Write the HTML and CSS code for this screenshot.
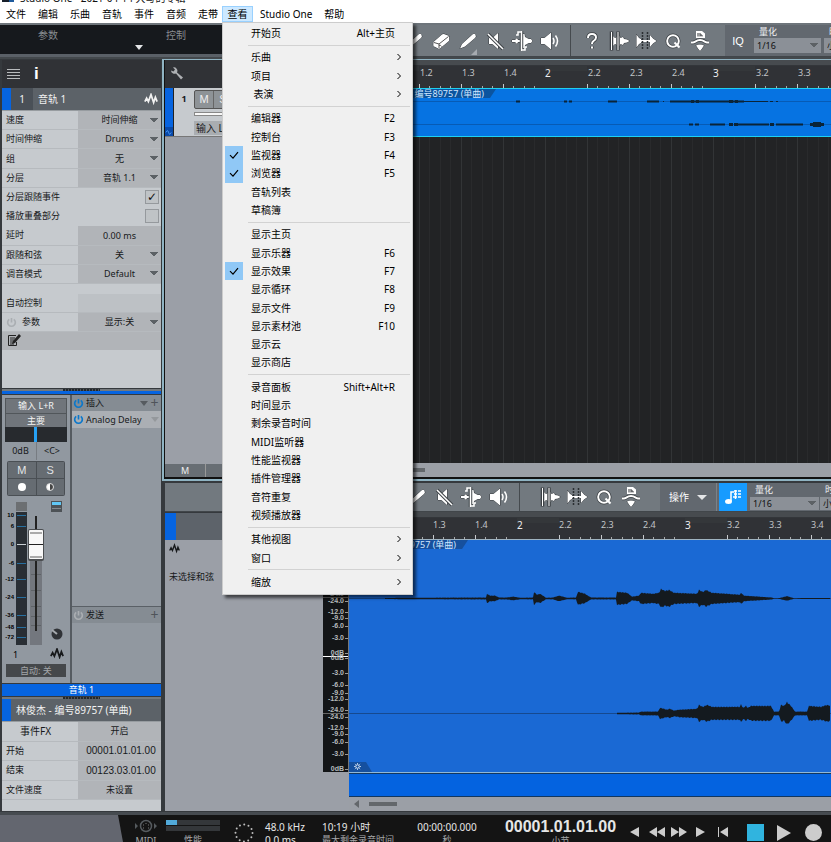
FILE: index.html
```html
<!DOCTYPE html>
<html lang="zh-CN">
<head>
<meta charset="utf-8">
<title>Studio One</title>
<link rel="stylesheet" href="styles.css">
</head>
<body>
<svg class="defs" aria-hidden="true">
  <symbol id="pen" viewBox="0 0 22 22"><path class="ink edge" d="M3 18.500 5 14 15.500 4.500q2-1.500 3 .5t-.5 3L8 16.500z"/></symbol>
  <symbol id="eraser" viewBox="0 0 22 22"><path class="ink edge" d="m3.500 12 8.500-7.500q1-.8 2.500-.3l4 1.500q.8.500.7 1.500v3.500l-9 7.500q-1 .8-2 .3l-4-2q-.9-.5-.9-1.500z"/><path class="cut" d="m4 12.500 5 1.500v4M9 14l9.500-7.500M9 15.500q1.500-1 2.500 1"/></symbol>
  <symbol id="mute" viewBox="0 0 22 22"><path class="ink edge" d="M5 8h3.500L14 3v16l-5.500-5H5z"/><path class="cut2" d="m4 4 15 15"/><path class="line" d="m4 4 15 15"/></symbol>
  <symbol id="split" viewBox="0 0 22 22"><path class="ink edge" d="M1 10h3l2-2 1 2h2v2H7l-1 2-2-2H1zM12 4h1.500l.5 3 2 1 1.500 1H20l1.500 2-1.500 2h-2.500L16 14l-2 1-.5 3H12z"/><path class="cut2" d="M10.500 1v20"/><path class="line" d="M10.500 1v20M10 2H7v3H5M11 20h3v-3h2"/></symbol>
  <symbol id="speaker" viewBox="0 0 22 22"><path class="ink edge" d="M3 8h3.500L13 2.500v17L6.500 14H3z"/><path class="line" d="M15 8q2 3 0 6M17.500 5.500q4 5.500 0 11"/></symbol>
  <symbol id="help" viewBox="0 0 22 22"><path class="shade" d="M7 8q0-4 4-4t4 3.500q0 2-2.500 3.500Q11 12 11 14M11 16.500v2"/><path class="line thick" d="M7 8q0-4 4-4t4 3.500q0 2-2.500 3.500Q11 12 11 14M11 16.500v2"/></symbol>
  <symbol id="strip" viewBox="0 0 22 22"><path class="ink edge" d="m5 6 2 2 2-1v8l-2-1-2 2zM11 5l1.500 3L15 7l1 2 3 .5 2.500 1.500-2.500 1.500-3 .5-1 2-2.500-1L11 17z"/><path class="shade" d="M3.500 1.500v19M10 1.500v19"/><path class="line slim" d="M3.500 2v18M10 2v18"/></symbol>
  <symbol id="bend" viewBox="0 0 22 22"><path class="ink edge" d="M1.500 4.500 4 8l2 1v4l-2 1-2.500 3.500zM15 5l3 3.500 3.500 2.500-3.500 2.500L15 17z"/><path class="ink" d="M6 10h9v2H6z"/><path class="dots" d="M7.500 2v18M12.500 2v18"/></symbol>
  <symbol id="quant" viewBox="0 0 22 22"><circle class="shade" cx="11" cy="11" r="5.800"/><circle class="line thick" cx="11" cy="11" r="5.800"/><path class="line thick" d="m12.500 12.500 5 5"/></symbol>
  <symbol id="macro" viewBox="0 0 22 22"><path class="ink" d="M7 1h6l3 2.500V8H7z"/><path class="mark" d="M9 3v3.500M11 3v3.500M11 5h2v1.500"/><path class="shade" d="M2 12.500h2c2 0 3-2.500 7-2.500s5 2.500 7 2.500h2"/><path class="line thick" d="M2 12.500h2c2 0 3-2.500 7-2.500s5 2.500 7 2.500h2"/><path class="ink edge" d="M7 15.500q4-2 8 0l-2 3-2 2.500-2-2.500z"/></symbol>
  <symbol id="wave" viewBox="0 0 16 12"><path d="M1 9 3 5 5 9 8 1 11 10 13 4 15 9" fill="none" stroke="currentColor" stroke-width="2"/></symbol>
  <symbol id="power" viewBox="0 0 12 12"><path d="M3.500 2.500a4.200 4.200 0 1 0 5 0M6 1v5" fill="none" stroke="currentColor" stroke-width="1.800"/></symbol>
  <symbol id="check" viewBox="0 0 12 12"><path d="m2 6 3 3 5-6" fill="none" stroke="currentColor" stroke-width="1.200"/></symbol>
  <symbol id="next" viewBox="0 0 8 8"><path d="m2.500 1 3 3-3 3" fill="none" stroke="currentColor"/></symbol>
</svg>

<div class="app">
  <header class="titlebar"><span class="app-icon"></span><span>Studio One - 2021-04-14 大写的专辑</span></header>
  <nav class="menubar">
    <button>文件</button><button>编辑</button><button>乐曲</button><button>音轨</button><button>事件</button><button>音频</button><button>走带</button>
    <div class="menu-anchor">
      <button class="open" aria-expanded="true">查看</button>
      <ul class="menu">
        <li><button>开始页<kbd>Alt+主页</kbd></button></li>
        <li class="sep"></li>
        <li><button>乐曲<svg class="next"><use href="#next"/></svg></button></li>
        <li><button>项目<svg class="next"><use href="#next"/></svg></button></li>
        <li><button>&nbsp;表演<svg class="next"><use href="#next"/></svg></button></li>
        <li class="sep"></li>
        <li><button>编辑器<kbd>F2</kbd></button></li>
        <li><button>控制台<kbd>F3</kbd></button></li>
        <li class="on"><svg class="tick"><use href="#check"/></svg><button>监视器<kbd>F4</kbd></button></li>
        <li class="on"><svg class="tick"><use href="#check"/></svg><button>浏览器<kbd>F5</kbd></button></li>
        <li><button>音轨列表</button></li>
        <li><button>草稿簿</button></li>
        <li class="sep"></li>
        <li><button>显示主页</button></li>
        <li><button>显示乐器<kbd>F6</kbd></button></li>
        <li class="on"><svg class="tick"><use href="#check"/></svg><button>显示效果<kbd>F7</kbd></button></li>
        <li><button>显示循环<kbd>F8</kbd></button></li>
        <li><button>显示文件<kbd>F9</kbd></button></li>
        <li><button>显示素材池<kbd>F10</kbd></button></li>
        <li><button>显示云</button></li>
        <li><button>显示商店</button></li>
        <li class="sep"></li>
        <li><button>录音面板<kbd>Shift+Alt+R</kbd></button></li>
        <li><button>时间显示</button></li>
        <li><button>剩余录音时间</button></li>
        <li><button>MIDI监听器</button></li>
        <li><button>性能监视器</button></li>
        <li><button>插件管理器</button></li>
        <li><button>音符重复</button></li>
        <li><button>视频播放器</button></li>
        <li class="sep"></li>
        <li><button>其他视图<svg class="next"><use href="#next"/></svg></button></li>
        <li><button>窗口<svg class="next"><use href="#next"/></svg></button></li>
        <li class="sep"></li>
        <li><button>缩放<svg class="next"><use href="#next"/></svg></button></li>
      </ul>
    </div>
    <button>Studio One</button><button>帮助</button>
  </nav>

  <div class="topbar">
    <div class="remote"><span>参数</span><i class="tri"></i><span>控制</span></div>
    <div class="toolbar">
      <div class="tools first">
        <button aria-label="箭头"></button><button aria-label="范围"></button><button aria-label="绘制"></button>
        <button aria-label="选择"><svg><use href="#pen"/></svg></button>
        <button aria-label="擦除"><svg><use href="#eraser"/></svg></button>
        <button aria-label="画笔" class="corner"><svg><use href="#pen"/></svg></button>
        <button aria-label="静音"><svg><use href="#mute"/></svg></button>
        <button aria-label="分割"><svg><use href="#split"/></svg></button>
        <button aria-label="监听"><svg><use href="#speaker"/></svg></button>
      </div>
      <div class="tools second">
        <button aria-label="帮助"><svg><use href="#help"/></svg></button>
        <button aria-label="剥离"><svg><use href="#strip"/></svg></button>
        <button aria-label="弯曲"><svg><use href="#bend"/></svg></button>
        <button aria-label="量化"><svg><use href="#quant"/></svg></button>
        <button aria-label="宏"><svg><use href="#macro"/></svg></button>
      </div>
      <div class="quantize">
        <button class="iq">IQ</button>
        <label class="qfield"><span>量化</span><select><option>1/16</option></select></label>
        <label class="qfield"><span>时基</span><select><option>小节</option></select></label>
      </div>
    </div>
  </div>

  <main class="workspace">
    <aside class="inspector">
      <div class="pane-head"><i class="burger"></i><b class="info">i</b></div>
      <div class="track-title"><i class="color"></i><span class="num">1</span><span class="name">音轨 1</span><svg class="wv"><use href="#wave"/></svg></div>
      <div class="params">
        <label class="row"><span>速度</span><select><option>时间伸缩</option></select></label>
        <label class="row"><span>时间伸缩</span><select><option>Drums</option></select></label>
        <label class="row"><span>组</span><select><option>无</option></select></label>
        <label class="row"><span>分层</span><select><option>音轨 1.1</option></select></label>
        <label class="row boxrow"><span>分层跟随事件</span><input type="checkbox" checked></label>
        <label class="row boxrow"><span>播放重叠部分</span><input type="checkbox"></label>
        <label class="row"><span>延时</span><input type="text" value="0.00 ms"></label>
        <label class="row"><span>跟随和弦</span><select><option>关</option></select></label>
        <label class="row"><span>调音模式</span><select><option>Default</option></select></label>
      </div>
      <div class="params auto">
        <div class="row"><span>自动控制</span><i class="blank"></i></div>
        <label class="row"><span><svg class="pw off"><use href="#power"/></svg>参数</span><select><option>显示:关</option></select></label>
      </div>
      <div class="notes"><svg viewBox="0 0 14 13"><path d="M9 1.500H1.500v10h8V8M3 4h5M3 6h4M3 8h3M3 10h4" fill="none" stroke="#222"/><path d="m12 0 2 2-6 7-3 1 1-3z" fill="#222"/></svg></div>
      <div class="filler"></div>
      <div class="grip"></div>
      <div class="accent"></div>
      <div class="channel">
        <div class="strip">
          <div class="io"><button>输入 L+R</button><button>主要</button><div class="pan"></div><div class="vals"><span>0dB</span><span>&lt;C&gt;</span></div></div>
          <div class="ms"><button>M</button><button>S</button><button aria-label="录音"><i class="dot"></i></button><button aria-label="监听"><i class="half"></i></button></div>
          <svg class="fader" viewBox="0 0 68 162">
            <rect x="14" y="2" width="11" height="9" fill="#6c6f72"/>
            <rect x="49" y="1" width="11" height="11" fill="#4d5256"/><rect x="50" y="2" width="9" height="3" fill="#60c7f5"/><path d="M50 8.500h9" stroke="#84898e"/>
            <rect x="14" y="12" width="11" height="133" fill="#292e34"/>
            <path d="M15 15.500h9M15 26.500h9M15 63.500h9M15 79.500h9M15 97.500h9M15 115.500h9M15 127.500h9M15 137.500h9" stroke="#2870a0"/><path d="M15 44.500h9" stroke="#c9d0d4"/>
            <rect x="28" y="45" width="12" height="100" fill="#73777e"/><path d="M29 74.500h10M29 90.500h10M29 106.500h10M29 116.500h10M29 125.500h10" stroke="#5e6267"/>
            <path d="M34 16v115" stroke="#222" stroke-width="2"/>
            <rect x="26" y="29" width="16" height="32" rx="2" fill="#4b4e51"/><rect x="27" y="30" width="14" height="29" rx="1" fill="#f8f8f8"/><path d="M28 33h12M28 57h12" stroke="#aaa" stroke-width="2"/><path d="M27 44.500h14" stroke="#222"/>
            <g class="scale"><text x="12" y="17">10</text><text x="12" y="28">6</text><text x="12" y="46">0</text><text x="12" y="65">-6</text><text x="12" y="81">-12</text><text x="12" y="99">-24</text><text x="12" y="117">-36</text><text x="12" y="129">-48</text><text x="12" y="139">-72</text></g>
            <circle cx="55" cy="134" r="5.500" fill="#303337"/><path d="m55 134-5-4" stroke="#a5a9ae" stroke-width="2"/>
            <text class="chnum" x="11" y="158">1</text>
            <use href="#wave" x="48" y="148" width="14" height="11" color="#17191b"/>
          </svg>
          <button class="automode">自动: 关</button>
        </div>
        <div class="racks">
          <div class="rack-head"><svg class="pw"><use href="#power"/></svg><span>插入</span><i class="tri grey"></i><b>+</b></div>
          <div class="plugin"><svg class="pw"><use href="#power"/></svg><span>Analog Delay</span><i class="tri pale"></i></div>
          <div class="filler"></div>
          <div class="rack-head sends"><svg class="pw off"><use href="#power"/></svg><span>发送</span><b>+</b></div>
          <div class="send-body"></div>
        </div>
      </div>
      <div class="channel-name">音轨 1</div>
      <div class="grip"></div>
      <div class="track-title event"><i class="color"></i><span class="name">林俊杰 - 编号89757 (单曲)</span></div>
      <div class="params eventrows">
        <div class="row"><span class="fx">事件FX</span><button>开启</button></div>
        <label class="row"><span>开始</span><input class="time" type="text" value="00001.01.01.00"></label>
        <label class="row"><span>结束</span><input class="time" type="text" value="00123.03.01.00"></label>
        <label class="row"><span>文件速度</span><input type="text" value="未设置"></label>
      </div>
    </aside>

    <div class="views">
      <section class="arrange">
        <div class="tracklist">
          <div class="pane-head"><svg class="wrench" viewBox="0 0 14 14"><path d="M1 3.500a3.500 3.500 0 0 0 5 3l5 6 2-2-6-5a3.500 3.500 0 0 0-4-5l2 2-1.500 2z" fill="#aeb1b4"/></svg></div>
          <div class="track">
            <div class="track-color"><svg viewBox="0 0 9 9"><path d="M1 5q2-4 3 0t3 0" fill="none" stroke="#4da0ff"/></svg></div>
            <b>1</b>
            <div class="track-body"><div class="tms"><button>M</button><button>S</button></div><i class="level"></i><button class="input">输入 L+R</button></div>
          </div>
          <div class="filler"></div>
          <div class="list-foot"><button>M</button></div>
        </div>
        <div class="timeline">
          <div class="band"></div>
          <div class="ruler"></div>
          <div class="clip"><span class="clip-name">林俊杰 - 编号89757 (单曲)</span><svg class="clip-wave" width="1000" height="48"></svg></div>
          <div class="grid"></div>
          <div class="hscroll"><i></i></div>
        </div>
      </section>

      <section class="editor">
        <div class="toolbar small">
          <div class="ed-left"></div>
          <div class="tools first">
            <button aria-label="箭头"></button><button aria-label="范围"></button>
            <button aria-label="画笔"><svg><use href="#pen"/></svg></button>
            <button aria-label="静音"><svg><use href="#mute"/></svg></button>
            <button aria-label="分割"><svg><use href="#split"/></svg></button>
            <button aria-label="监听"><svg><use href="#speaker"/></svg></button>
          </div>
          <div class="tools third">
            <button aria-label="剥离"><svg><use href="#strip"/></svg></button>
            <button aria-label="弯曲"><svg><use href="#bend"/></svg></button>
            <button aria-label="量化"><svg><use href="#quant"/></svg></button>
            <button aria-label="宏"><svg><use href="#macro"/></svg></button>
          </div>
          <div class="quantize">
            <button class="actions">操作<i class="tri"></i></button>
            <button class="music" aria-label="音符网格"><svg viewBox="0 0 20 20"><ellipse cx="5.500" cy="14.500" rx="3.500" ry="2.500" fill="#fff"/><path d="M8 14V5h3M11 4h3M15 4h3M11 7h3M15 7h3M10 10h4M15 10h3M12.500 3v9" stroke="#fff" fill="none" stroke-width="1.500"/></svg></button>
            <label class="qfield"><span>量化</span><select><option>1/16</option></select></label>
            <label class="qfield"><span>时基</span><select><option>小节</option></select></label>
          </div>
        </div>
        <div class="ed-main">
          <div class="ed-side">
            <div class="ed-track"><i></i></div>
            <div class="ed-cols">
              <div class="chord"><svg><use href="#wave"/></svg><span>未选择和弦</span></div>
              <div class="db">
                <div class="half-scale up"><span>-24.0</span><span>-12.0</span><span>-9.0</span><span>-6.0</span><span>-3.0</span><span>0dB</span></div>
                <div class="half-scale"><span>-24.0</span><span>-12.0</span><span>-9.0</span><span>-6.0</span><span>-3.0</span><span>0dB</span></div>
                <div class="half-scale up split"><span>-24.0</span><span>-12.0</span><span>-9.0</span><span>-6.0</span><span>-3.0</span><span>0dB</span></div>
                <div class="half-scale"><span>-24.0</span><span>-12.0</span><span>-9.0</span><span>-6.0</span><span>-3.0</span><span>0dB</span></div>
              </div>
            </div>
          </div>
          <div class="timeline">
            <div class="band"></div>
            <div class="ruler"></div>
            <div class="wave-area"><span class="clip-name">林俊杰 - 编号89757 (单曲)</span><svg class="big-wave" width="1000" height="232"></svg><span class="gear"><svg viewBox="0 0 8 8"><circle cx="4" cy="4" r="2" fill="none" stroke="#fff"/><path d="M4 0v1.500M4 6.500V8M0 4h1.500M6.500 4H8M1 1l1 1M6 6l1 1M7 1 6 2M2 6 1 7" stroke="#cde"/></svg></span></div>
            <div class="overview"></div>
            <div class="hscroll bottom"><i class="left"></i><i></i></div>
          </div>
        </div>
      </section>
    </div>
  </main>

  <footer class="transport">
    <div class="corner-plate"></div>
    <div class="cell midi"><svg viewBox="0 0 24 14"><path d="M1 4v6l3-3zM20 4v6l3-3z" fill="#555a5e"/><circle cx="12" cy="7" r="5.500" fill="none" stroke="#565b5f" stroke-width="1.500"/><path d="M9 9h1M14 9h1M9 6h1M14 6h1M12 4v1" stroke="#777"/></svg><span>MIDI</span></div>
    <div class="cell perf"><i class="bar lit"></i><i class="bar"></i><span>性能</span></div>
    <div class="cell ring"><svg viewBox="0 0 22 22"><circle cx="11" cy="11" r="8.500" fill="none" stroke="#bcbcbc" stroke-width="2" stroke-linecap="round" stroke-dasharray="0 4.450"/></svg></div>
    <div class="cell rate"><strong>48.0 kHz</strong><strong>0.0 ms</strong></div>
    <div class="cell remain"><strong>10:19 小时</strong><span>最大剩余录音时间</span></div>
    <div class="cell secs"><strong>00:00:00.000</strong><span>秒</span></div>
    <div class="cell bars"><strong>00001.01.01.00</strong><span>小节</span></div>
    <div class="nav">
      <button aria-label="后退一格"><svg viewBox="0 0 16 12"><path d="M12 1v10L3 6z"/></svg></button>
      <button aria-label="快退"><svg viewBox="0 0 16 12"><path d="M8 1v10L0 6zM16 1v10L8 6z"/></svg></button>
      <button aria-label="快进"><svg viewBox="0 0 16 12"><path d="M0 1v10l8-5zM8 1v10l8-5z"/></svg></button>
      <button aria-label="前进一格"><svg viewBox="0 0 16 12"><path d="M3 1v10l9-5z"/></svg></button>
      <button aria-label="回到开头"><svg viewBox="0 0 16 12"><path d="M3 1h1v10H3zM13 1v10L5 6z"/></svg></button>
    </div>
    <div class="play">
      <button aria-label="停止"><i class="stop"></i></button>
      <button aria-label="播放"><svg viewBox="0 0 16 18"><path d="M1 1v16l14-8z"/></svg></button>
      <button aria-label="录音"><i class="rec"></i></button>
    </div>
  </footer>
</div>
<script src="app.js"></script>
</body>
</html>
```
FILE: styles.css
```css
* { box-sizing: border-box; }
body { margin: 0; overflow: hidden; font: 9px/12px "Noto Sans", "Noto Sans CJK SC", sans-serif; color: #17191b; background: #565b60; }
button, input, select { font: inherit; color: inherit; margin: 0; padding: 0; border: 0; border-radius: 0; background: none; }
select { appearance: none; }
ul { margin: 0; padding: 0; list-style: none; }
i { display: block; font-style: normal; }
.defs { position: absolute; width: 0; height: 0; }
.app { height: 100vh; display: flex; flex-direction: column; }
.filler { flex: 1; }
.tri { width: 0; height: 0; border: 4px solid transparent; border-top: 5px solid #e4e6e8; border-bottom: 0; }
.tri.grey { border-top-color: #565b60; }
.tri.pale { border-top-color: #94989c; }

.titlebar { flex: 0 0 5px; overflow: hidden; background: #fff; display: flex; align-items: flex-end; gap: 6px; padding-left: 2px; font-size: 10px; line-height: 14px; color: #111; }
.titlebar span:last-child { white-space: nowrap; }
.app-icon { width: 12px; height: 3px; margin-bottom: 3px; background: #17202b; border-right: 5px solid #1e5b9d; }

.menubar { flex: 0 0 18px; display: flex; background: #fff; font-size: 10px; }
.menubar > button { height: 18px; min-width: 32px; padding: 0 6px; white-space: nowrap; color: #000; line-height: 17px; }
.menu-anchor { position: relative; width: 32px; margin-left: -2px; }
.open { width: 31px; height: 16px; margin-top: 1px; background: #cce8ff; border: 1px solid #99d1ff; line-height: 14px; color: #000; }
.menu { position: absolute; z-index: 10; left: 0; top: 17px; width: 191px; height: 573px; display: flex; flex-direction: column; padding: 1px 2px 3px; background: #f0f0f0; border: 1px solid #ccc; box-shadow: 3px 3px 3px #0009; color: #000; }
.menu li { flex: 1; display: flex; align-items: center; padding-left: 26px; min-height: 0; }
.menu li.sep { flex: 0 0 6px; padding: 0; }
.menu li.sep::before { content: ""; flex: 1; margin-left: 23px; height: 1px; background: #d2d2d2; }
.menu button { flex: 1; display: flex; align-items: center; justify-content: space-between; padding-right: 15px; line-height: 14px; text-align: left; }
.menu kbd { font: inherit; }
.menu li.on { padding-left: 0; }
.menu .tick { width: 18px; margin-right: 8px; align-self: stretch; height: auto; padding: 3px; background: #90c8f6; }
.menu .next { width: 8px; height: 8px; margin-right: -8px; }

.topbar { flex: 0 0 36px; display: flex; border-top: 2px solid #6e757b; border-bottom: 2px solid #43484c; background: #5a6067; }
.remote { flex: 0 0 319px; height: 29px; background: #16191d; display: flex; color: #888c90; font-size: 10px; line-height: 20px; padding-left: 38px; }
.remote .tri { margin: 20px 23px 0 77px; }
.toolbar { flex: 1; min-width: 0; display: flex; overflow: hidden; background: #72797f; border-bottom: 1px solid #41464a; }
.tools { display: flex; flex: none; align-items: center; }
.tools.first { padding-right: 8px; border-right: 1px solid #454a4e; }
.tools.second { padding: 0 12px 0 7px; }
.tools.third { padding: 0 16px; }
.tools button { width: 27px; height: 28px; display: grid; place-items: center; position: relative; }
.tools svg { width: 22px; height: 22px; }
.corner::after { content: ""; position: absolute; right: 4px; bottom: 0; border: 3px solid #a6abb0; border-top-color: transparent; border-left-color: transparent; }
.ink { fill: #fff; }
.edge { stroke: #35393d; stroke-width: 1; paint-order: stroke; }
.line { fill: none; stroke: #fff; stroke-width: 1.5; }
.slim { stroke-width: 1; }
.thick { stroke-width: 2; }
.shade { fill: none; stroke: #3c4145; stroke-width: 3.5; }
.mark { fill: none; stroke: #33373b; }
.cut { fill: none; stroke: #555; }
.cut2 { fill: none; stroke: #3f4448; stroke-width: 3.5; }
.dots { fill: none; stroke: #2b2f32; stroke-width: 1.5; stroke-dasharray: 2 1; }
.quantize { flex: 1; display: flex; background: #62686f; overflow: hidden; color: #fff; }
.iq { width: 26px; flex: none; font: 11px "Liberation Sans", sans-serif; }
.qfield { flex: 0 0 67px; margin-left: 3px; display: flex; flex-direction: column; }
.qfield span { padding-left: 5px; line-height: 13px; color: #eef0f2; font-size: 9px; }
.qfield select { width: 100%; height: 15px; line-height: 15px; padding-left: 3px; color: #111; background-color: #8b9097; }
.qfield select, .row select { background-image: linear-gradient(to bottom left, #5c6165 50%, transparent 50%), linear-gradient(to bottom right, #5c6165 50%, transparent 50%); background-size: 4px 5px; background-repeat: no-repeat; background-position: right 7px center, right 3px center; }

.workspace { flex: 1; min-height: 0; display: flex; }
.inspector { flex: 0 0 162px; display: flex; flex-direction: column; border: solid #35393d; border-width: 1px 1px 1px 2px; background: #c6cace; }
.pane-head { flex: 0 0 28px; display: flex; align-items: center; background: #303236; padding-left: 5px; gap: 14px; }
.burger { width: 13px; height: 10px; background: repeating-linear-gradient(#b9bcbe 0 1px, transparent 1px 3px); }
.info { font: bold 17px/20px "Liberation Sans", sans-serif; color: #fff; }
.track-title { flex: 0 0 23px; display: flex; align-items: center; background: #5c6268; color: #f2f2f2; font-size: 10px; padding-right: 3px; border-bottom: 1px solid #979ca0; }
.track-title .color { width: 9px; align-self: stretch; background: #0664e0; }
.track-title .num { width: 22px; align-self: stretch; line-height: 22px; text-align: center; background: #4a5057; }
.track-title .name { flex: 1; padding-left: 5px; white-space: nowrap; }
.wv { width: 14px; height: 12px; }
.params { flex: 0 0 173px; display: flex; flex-direction: column; }
.row { flex: 1; display: flex; align-items: center; border-bottom: 1px solid #b6babe; min-height: 0; }
.row > span { flex: 1; padding-left: 4px; white-space: nowrap; display: flex; align-items: center; gap: 5px; }
.row select, .row input[type=text], .row button, .row .blank { width: 83px; height: 100%; background-color: #b1b4b8; text-align: center; }
.row select { text-align-last: center; }
.row .blank { background: #bdc1c5; }
.row input.time { padding-left: 3px; font: 10px "Liberation Sans", sans-serif; }
.boxrow { border-color: #c6cace; }
.row input[type=checkbox] { appearance: none; width: 14px; height: 14px; margin-right: 2px; border: 1px solid #95999d; background: #bfc3c6; display: grid; place-items: center; }
.row input[type=checkbox]:checked::after { content: "✓"; font: bold 12px/12px "DejaVu Sans"; color: #111; }
.auto { flex: 0 0 38px; margin-top: 10px; }
.pw { width: 11px; height: 11px; color: #0b78cb; flex: none; }
.pw.off { color: #aaaeb2; }
.notes { flex: 0 0 18px; background: #b1b4b8; padding: 2px 5px; }
.notes svg { width: 14px; height: 13px; display: block; }
.grip { flex: 0 0 3px; background: repeating-linear-gradient(90deg, #24282b 0 2px, #4f5458 2px 3px) 61px 0 / 37px 3px no-repeat, #73787c; border-top: 1px solid #35393d; }
.accent { flex: 0 0 3px; background: #0664e0; }
.channel { flex: 0 0 289px; display: flex; border-top: 1px solid #35393d; background: #9198a0; }
.strip { flex: 0 0 69px; border-right: 2px solid #555b61; display: flex; flex-direction: column; }
.io { margin: 3px 3px 0; display: grid; grid-template-rows: 15px 14px 15px 15px; }
.io button { color: #f5f5f5; background: #70757b; border: 1px solid #51565a; border-bottom: 0; line-height: 14px; }
.pan { background: linear-gradient(90deg, transparent 29px, #26a1f5 29px 32px, transparent 32px), #272a2e; }
.vals, .ms { display: grid; grid-template-columns: 1fr 1fr; text-align: center; }
.vals { line-height: 18px; }
.vals span + span { border-left: 1px solid #777c82; }
.ms { margin: 4px 5px 0; grid-auto-rows: 16px; gap: 1px; padding: 1px; background: #4a4f54; border-radius: 2px; }
.ms button { background: #666c72; color: #e2e4e6; font: 11px "Liberation Sans", sans-serif; display: grid; place-items: center; }
.dot, .half { width: 8px; height: 8px; border-radius: 50%; background: #fff; }
.half { background: linear-gradient(90deg, #fff 50%, #444 50%); border: 1px solid #ddd; }
.fader { margin-top: 4px; width: 68px; height: 162px; display: block; flex: none; }
.scale text { font: bold 6px "Liberation Sans", sans-serif; text-anchor: end; }
.chnum { font: 9px "Noto Sans", sans-serif; }
.automode { margin: 2px 4px 0; height: 13px; flex: none; background: #45484b; color: #a3a6a9; line-height: 12px; }
.racks { flex: 1; display: flex; flex-direction: column; }
.rack-head, .plugin { height: 16px; display: flex; align-items: center; gap: 2px; padding: 0 2px 0 1px; background: #858c93; }
.rack-head span, .plugin span { flex: 1; white-space: nowrap; }
.rack-head b { font: 14px/12px "Noto Sans"; color: #4f5459; width: 9px; text-align: center; }
.plugin { height: 17px; background: #abafb4; }
.sends { border-top: 1px solid #5a6066; height: 17px; }
.send-body { flex: 0 0 60px; }
.channel-name { flex: 0 0 13px; background: #0664e0; color: #fff; text-align: center; border-top: 1px solid #35393d; line-height: 11px; }
.event .name { padding-left: 5px; }
.eventrows { flex: 0 0 78px; margin-bottom: 11px; }
.row .fx { font-size: 10px; padding-left: 18px; }

.views { flex: 1; min-width: 0; display: flex; flex-direction: column; }
.arrange { flex: 1; min-height: 0; display: flex; border: solid #8fb3c2; border-width: 1px 0 2px 2px; }
.tracklist { flex: 0 0 213px; display: flex; flex-direction: column; background: #9b9fa7; border-left: 1px solid #111; border-bottom: 2px solid #111; }
.wrench { width: 14px; height: 14px; }
.track { flex: 0 0 49px; display: flex; background: #c6cace; border-bottom: 1px solid #777; }
.track-color { width: 9px; background: linear-gradient(#0664e0 39px, #0949a8 39px); display: flex; align-items: flex-end; border-right: 1px solid #222; }
.track > b { width: 20px; text-align: center; line-height: 22px; }
.track-body { flex: 1; padding-top: 2px; }
.tms { width: 40px; display: flex; background: #8e9397; border: 1px solid #555; border-radius: 2px; }
.tms button { flex: 1; color: #eee; font: 11px/17px "Liberation Sans", sans-serif; height: 17px; border-right: 1px solid #666; }
.level { height: 4px; margin: 3px 0 5px; background: #f8f8f8; border: 1px solid #888; }
.input { background: #a9adb1; padding: 0 2px; height: 14px; line-height: 14px; font-size: 10px; }
.list-foot { flex: 0 0 13px; display: flex; background: #686e74; color: #eee; }
.list-foot button { width: 41px; border-right: 1px solid #999; line-height: 12px; font-size: 9px; }
.timeline { flex: 1; min-width: 0; display: flex; flex-direction: column; overflow: hidden; }
.band { flex: 0 0 6px; background: #474b4f; border-bottom: 1px solid #33363a; }
.ruler { flex: 0 0 22px; display: flex; overflow: hidden; background: #303236; color: #c2c5c8; }
.beat { flex: 0 0 42px; padding-left: 1px; line-height: 14px; background: linear-gradient(#c8cacc, #c8cacc) 0 100% / 1px 4px no-repeat, linear-gradient(#aaa, #aaa) 10px 100% / 1px 2px no-repeat, linear-gradient(#aaa, #aaa) 21px 100% / 1px 2px no-repeat, linear-gradient(#aaa, #aaa) 31px 100% / 1px 2px no-repeat; }
.beat.bar { padding-left: 0; font-size: 10px; color: #eee; background-size: 1px 8px, 1px 2px, 1px 2px, 1px 2px; }
.clip { flex: 0 0 49px; position: relative; background: #0673e2; border: solid #1fd0f0; border-width: 1px 0; overflow: hidden; }
.clip-name { display: block; width: 119px; height: 9px; line-height: 9px; padding-left: 3px; white-space: nowrap; color: #cfe6ff; background: #0b549f; clip-path: polygon(0 0, 100% 0, calc(100% - 6px) 100%, 0 100%); }
.clip-wave, .big-wave { position: absolute; left: 0; top: 0; }
.grid { flex: 1; background: repeating-linear-gradient(90deg, #323436 0 1px, transparent 1px 10px, #292a2c 10px 11px, transparent 11px 21px, #292a2c 21px 22px, transparent 22px 31px, #292a2c 31px 32px, transparent 32px 42px), #222325; }
.hscroll { flex: 0 0 16px; display: flex; align-items: center; padding-bottom: 1px; background: #9b9fa6; border-bottom: 2px solid #111; }
.hscroll i { width: 28px; height: 4px; margin-left: 20px; background: #63676b; }

.editor { flex: 0 0 331px; display: flex; flex-direction: column; border: solid #35393d; border-width: 2px 0 1px 3px; background: #9b9fa7; }
.toolbar.small { flex: 0 0 29px; }
.ed-left { flex: 0 0 184px; }
.small .tools button { left: 0; }
.small .qfield { flex-basis: 69px; }
.small .qfield + .qfield { margin-left: 1px; }
.small .qfield span { line-height: 14px; }
.small .qfield select { height: 13px; line-height: 12px; }
.actions { width: 57px; flex: none; display: flex; align-items: center; justify-content: center; gap: 8px; font-size: 10px; border-right: 1px solid #7c8288; white-space: nowrap; }
.actions .tri { border-width: 5px 5px 0; }
.music { flex: 0 0 28px; margin-left: 2px; background: #179bff; display: grid; place-items: center; }
.music svg { width: 20px; height: 20px; }
.ed-main { flex: 1; min-height: 0; display: flex; }
.ed-side { flex: 0 0 184px; display: flex; flex-direction: column; }
.ed-track { flex: 0 0 28px; background: #5d636a; border-top: 1px solid #35393d; display: flex; }
.ed-track i { width: 11px; background: #0664e0; }
.ed-cols { flex: 1; display: flex; align-items: flex-start; }
.chord { flex: 1; padding: 3px 4px; display: flex; flex-direction: column; gap: 17px; }
.chord svg { width: 11px; height: 11px; }
.db { width: 26px; background: #131517; color: #b6babd; border-right: 1px solid #777; }
.half-scale { height: 58px; display: flex; flex-direction: column; font: bold 7px/6px "Liberation Sans", sans-serif; text-align: right; padding-right: 4px; }
.half-scale.up { flex-direction: column-reverse; border-bottom: 1px solid #666; }
.half-scale.split { border-top: 1px solid #fff; }
.half-scale span { height: 6px; position: relative; }
.half-scale span::after { content: ""; position: absolute; right: -4px; top: 3px; width: 3px; height: 1px; background: #999; }
.half-scale span:nth-child(2) { margin-top: 5px; }
.half-scale span:nth-child(4) { margin-top: 2px; }
.half-scale span:nth-child(5) { margin-top: 6px; }
.half-scale span:nth-child(6) { margin-top: 9px; }
.up span:nth-child(n) { margin-top: 0; }
.up span:nth-child(2) { margin-bottom: 5px; }
.up span:nth-child(4) { margin-bottom: 2px; }
.up span:nth-child(5) { margin-bottom: 6px; }
.up span:nth-child(6) { margin-bottom: 9px; }
.editor .ruler { border-bottom: 1px solid #9fb3c0; }
.editor .beat { padding-left: 0; }
.wave-area { flex: 0 0 233px; position: relative; background: #1a69d4; border-bottom: 1px solid #8fb8d8; overflow: hidden; }
.wave-area .clip-name { background: #16509e; }
.gear { position: absolute; left: 0; bottom: 0; width: 23px; height: 10px; padding: 1px 5px; background: #15509f; clip-path: polygon(0 0, 17px 0, 100% 100%, 0 100%); }
.gear svg { width: 7px; height: 7px; display: block; }
.overview { flex: 1; background: #0463e0; border: solid #12375f; border-width: 1px 0; }
.hscroll.bottom { flex: 0 0 14px; border: 0; padding: 0; }
.hscroll i.left { width: 0; height: 0; margin-left: 5px; background: none; border: 4px solid transparent; border-right: 5px solid #63676b; border-left: 0; }
.hscroll i.left + i { margin-left: 10px; }

.transport { flex: 0 0 30px; display: flex; align-items: flex-start; background: #141414; border-top: 3px solid #464b50; color: #a5a7a9; overflow: hidden; }
.corner-plate { flex: 0 0 128px; height: 27px; background: #63666f; clip-path: polygon(0 0, 118px 0, 123px 100%, 0 100%); }
.cell { flex: none; display: flex; flex-direction: column; align-items: center; white-space: nowrap; line-height: 11px; }
.cell strong { font-weight: 400; font-size: 10px; line-height: 13px; color: #e6e6e6; }
.cell strong:first-child { margin-top: 6px; }
.midi { width: 36px; }
.midi svg { width: 24px; height: 14px; margin: 4px 0 2px; }
.perf { width: 58px; padding-top: 5px; gap: 1px; }
.bar { width: 54px; height: 5px; background: #34373a; }
i.lit { background: linear-gradient(90deg, #51a9d9 11px, #34373a 11px); }
.perf span { margin-top: 2px; }
.ring { width: 43px; padding-top: 7px; }
.ring svg { width: 22px; height: 22px; }
.rate { width: 57px; align-items: flex-start; }
.remain { width: 75px; align-items: flex-start; }
.secs { width: 100px; }
.bars { width: 127px; }
.bars strong { font: bold 16px/16px "Liberation Sans", sans-serif; }
.bars strong:first-child { margin-top: 4px; }
.nav, .play { display: flex; flex: none; }
.nav button { width: 22px; height: 33px; display: grid; place-items: center; }
.nav svg { width: 16px; height: 12px; }
.nav path, .play path { fill: #ccc; }
.play { padding-left: 7px; gap: 1px; }
.play button { width: 28px; height: 35px; display: grid; place-items: center; }
.play svg { width: 16px; height: 18px; }
.stop { width: 17px; height: 17px; background: #30b4df; }
.rec { width: 17px; height: 17px; border-radius: 50%; background: #ccc; }
```
FILE: app.js
```js
const NS = "http://www.w3.org/2000/svg";

// Beat cells for each time ruler; the first beat of a bar shows only the bar number.
document.querySelectorAll(".ruler").forEach((ruler) => {
  for (let i = 0; i < 12; i++) {
    const bar = Math.floor(i / 4) + 1;
    const beat = (i % 4) + 1;
    const cell = document.createElement("span");
    cell.className = beat === 1 ? "beat bar" : "beat";
    cell.textContent = beat === 1 ? bar : bar + "." + beat;
    ruler.append(cell);
  }
});

function add(svg, name, attrs) {
  const el = document.createElementNS(NS, name);
  for (const key in attrs) el.setAttribute(key, attrs[key]);
  svg.append(el);
}

// Draws a mirrored envelope from [x, amplitude] points.
function envelope(svg, mid, points) {
  const top = [];
  const bottom = [];
  for (let p = 0; p < points.length - 1; p++) {
    const [x0, a0] = points[p];
    const [x1, a1] = points[p + 1];
    for (let x = x0; x < x1; x++) {
      const a = a0 + ((a1 - a0) * (x - x0)) / (x1 - x0);
      const up = a * (0.94 + 0.07 * Math.sin(x * 2.3));
      const down = a * (0.9 + 0.08 * Math.cos(x * 1.9));
      top.push(x + "," + (mid - up));
      bottom.unshift(x + "," + (mid + down));
    }
  }
  add(svg, "polygon", { points: top.concat(bottom).join(" "), fill: "#141a1f" });
}

const big = document.querySelector(".big-wave");
[58, 173].forEach((y) => add(big, "rect", { x: 0, y, width: 1000, height: 1, fill: "#16498f" }));
envelope(big, 58.5, [[36, 0.4], [52, 0.8], [137, 1], [138, 5], [141, 3], [146, 3], [150, 1], [158, 1], [164, 2], [172, 0.8], [184, 1], [185, 7], [188, 4], [191, 5], [197, 0.8], [204, 1], [210, 3], [218, 0.8], [227, 1], [229, 7], [236, 5], [242, 1], [267, 1], [268, 7], [278, 6], [283, 2], [290, 3], [292, 6], [304, 5], [310, 6], [312, 10], [316, 8], [320, 9], [325, 6], [348, 5], [350, 9], [354, 7], [357, 9], [363, 6], [391, 4], [392, 6], [395, 3], [410, 2], [423, 1], [425, 0.2], [430, 0.4], [438, 2.5], [445, 0.3], [458, 0.6], [482, 0.6]]);
envelope(big, 173.5, [[268, 0.8], [290, 1], [292, 2], [309, 2], [311, 6], [318, 4], [321, 5], [325, 3], [330, 4], [348, 5], [350, 9], [354, 7], [358, 9], [363, 7], [391, 7], [392, 10], [394, 6], [397, 8], [399, 6], [402, 8], [422, 8], [425, 2], [430, 2], [432, 9], [435, 8], [438, 12], [442, 8], [446, 2], [458, 2], [460, 8], [472, 7], [478, 9], [482, 8]]);

const clip = document.querySelector(".clip-wave");
[12, 35].forEach((y) => add(clip, "rect", { x: 0, y, width: 1000, height: 1, fill: "#075bb5" }));
// Each entry: centre line, start, length, thickness.
[
  [12, 139, 4, 2], [12, 187, 3, 2], [12, 192, 3, 2], [12, 231, 9, 2], [12, 270, 12, 2], [12, 286, 1, 1],
  [12, 293, 74, 2], [12, 314, 3, 3], [12, 319, 3, 3], [12, 352, 4, 3], [12, 358, 3, 3], [12, 367, 24, 1], [12, 393, 3, 1], [12, 399, 2, 1],
  [35, 312, 4, 2], [35, 318, 4, 2], [35, 333, 15, 2], [35, 352, 4, 3], [35, 357, 4, 3], [35, 361, 31, 2],
  [35, 393, 4, 3], [35, 399, 27, 2], [35, 433, 14, 3], [35, 436, 8, 5]
].forEach(([mid, x, width, height]) => add(clip, "rect", { x, y: mid + 0.5 - height / 2, width, height, fill: "#0a2438" }));
```
